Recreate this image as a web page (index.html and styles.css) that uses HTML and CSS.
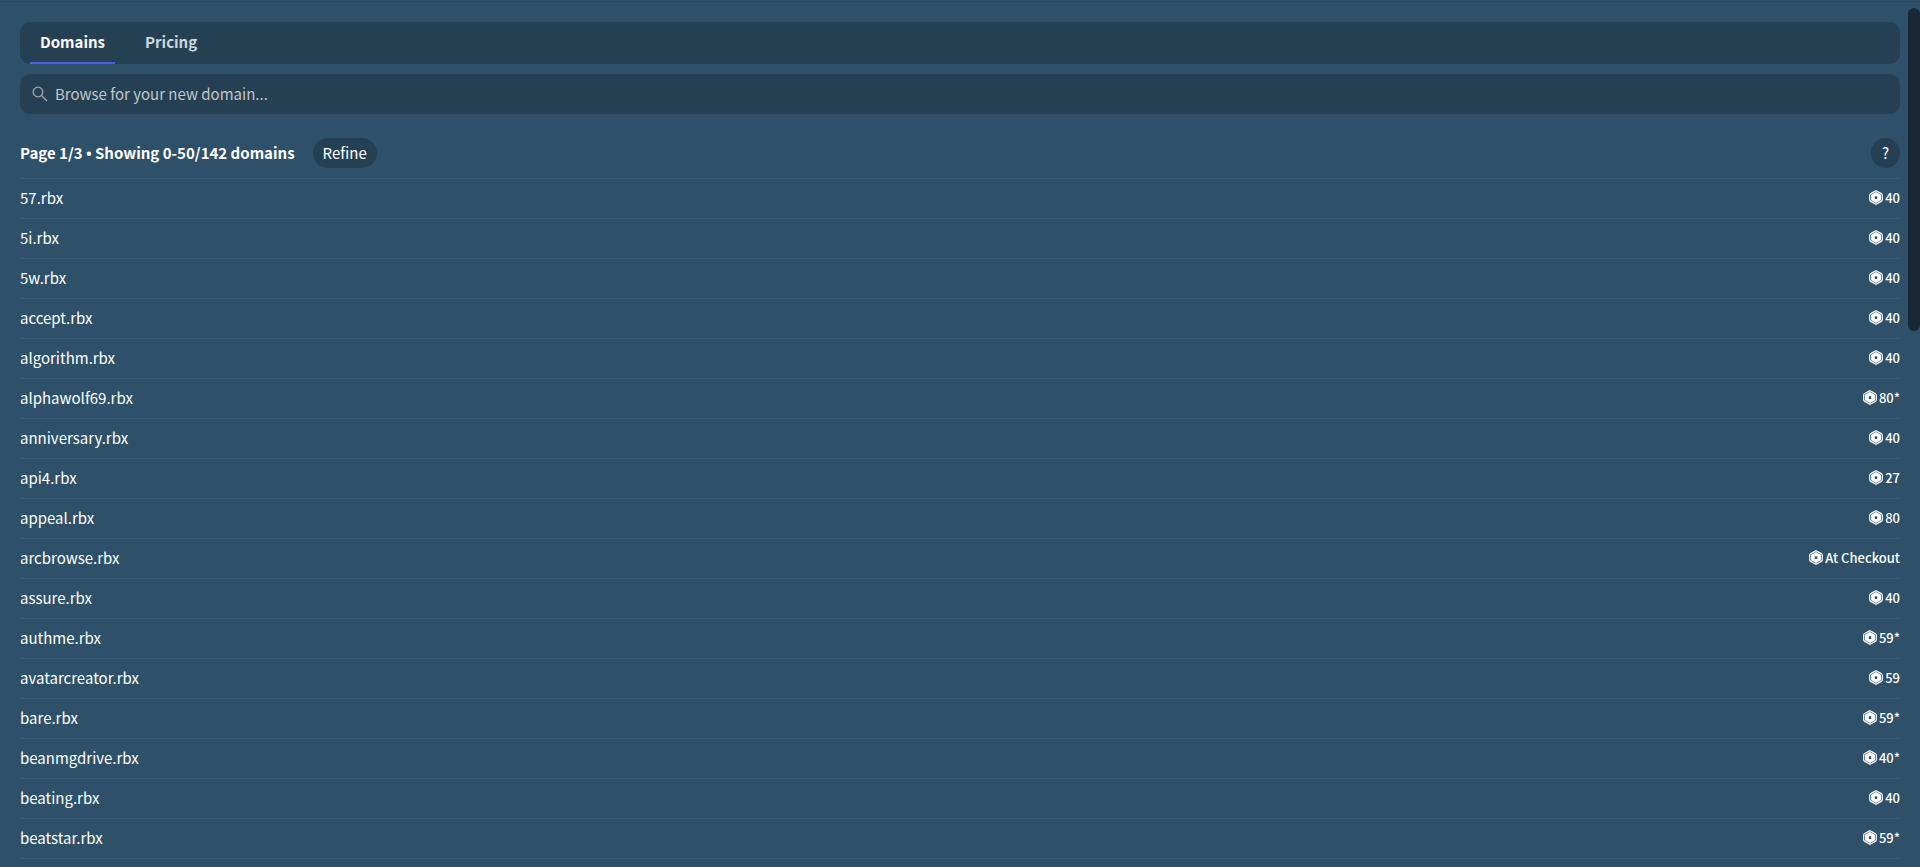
FILE: index.html
```html
<!DOCTYPE html>
<html lang="en">
<head>
<meta charset="utf-8">
<title>Domains</title>
<link rel="stylesheet" href="styles.css">
</head>
<body>
<svg class="sprite" aria-hidden="true">
  <symbol id="coin" viewBox="0 0 14 15">
    <path class="coin-ring" d="M7 .7 12.3 3.6Q13.3 4.2 13.3 5.2V9.8Q13.3 10.8 12.3 11.4L7 14.3 1.7 11.4Q.7 10.8.7 9.8V5.2Q.7 4.2 1.7 3.6Z"/>
    <path class="coin-core" fill-rule="evenodd" d="M7 1.9 12 4.7V10.3L7 13.1 2 10.3V4.7ZM5.8 6.2V9H8.2V6.2Z"/>
  </symbol>
</svg>
<main class="page">
  <nav class="tabs">
    <button class="tab tab-active" type="button">Domains</button>
    <button class="tab" type="button">Pricing</button>
  </nav>
  <label class="search">
    <svg class="search-icon" viewBox="0 0 16 16" aria-hidden="true"><circle cx="6" cy="6" r="4.8"/><path d="M9.5 9.5 15 15"/></svg>
    <input class="search-input" type="text" placeholder="Browse for your new domain..." aria-label="Browse for your new domain">
  </label>
  <header class="summary">
    <h1 class="summary-title">Page 1/3 <span class="bullet">•</span> Showing 0-50/142 domains</h1>
    <button class="pill" type="button">Refine</button>
    <button class="pill pill-help" type="button">?</button>
  </header>
  <ul class="list">
    <li class="row"><span>57.rbx</span><span class="price"><svg class="coin"><use href="#coin"/></svg>40</span></li>
    <li class="row"><span>5i.rbx</span><span class="price"><svg class="coin"><use href="#coin"/></svg>40</span></li>
    <li class="row"><span>5w.rbx</span><span class="price"><svg class="coin"><use href="#coin"/></svg>40</span></li>
    <li class="row"><span>accept.rbx</span><span class="price"><svg class="coin"><use href="#coin"/></svg>40</span></li>
    <li class="row"><span>algorithm.rbx</span><span class="price"><svg class="coin"><use href="#coin"/></svg>40</span></li>
    <li class="row"><span>alphawolf69.rbx</span><span class="price"><svg class="coin"><use href="#coin"/></svg>80*</span></li>
    <li class="row"><span>anniversary.rbx</span><span class="price"><svg class="coin"><use href="#coin"/></svg>40</span></li>
    <li class="row"><span>api4.rbx</span><span class="price"><svg class="coin"><use href="#coin"/></svg>27</span></li>
    <li class="row"><span>appeal.rbx</span><span class="price"><svg class="coin"><use href="#coin"/></svg>80</span></li>
    <li class="row"><span>arcbrowse.rbx</span><span class="price"><svg class="coin"><use href="#coin"/></svg>At Checkout</span></li>
    <li class="row"><span>assure.rbx</span><span class="price"><svg class="coin"><use href="#coin"/></svg>40</span></li>
    <li class="row"><span>authme.rbx</span><span class="price"><svg class="coin"><use href="#coin"/></svg>59*</span></li>
    <li class="row"><span>avatarcreator.rbx</span><span class="price"><svg class="coin"><use href="#coin"/></svg>59</span></li>
    <li class="row"><span>bare.rbx</span><span class="price"><svg class="coin"><use href="#coin"/></svg>59*</span></li>
    <li class="row"><span>beanmgdrive.rbx</span><span class="price"><svg class="coin"><use href="#coin"/></svg>40*</span></li>
    <li class="row"><span>beating.rbx</span><span class="price"><svg class="coin"><use href="#coin"/></svg>40</span></li>
    <li class="row"><span>beatstar.rbx</span><span class="price"><svg class="coin"><use href="#coin"/></svg>59*</span></li>
  </ul>
</main>
<div class="scroll-thumb"></div>
</body>
</html>
```
FILE: styles.css
```css
* { box-sizing: border-box; }

body {
  margin: 0;
  min-height: 100vh;
  background: #2e5169;
  border-top: 1px solid #2e5169;
  box-shadow: inset 0 1px #294a60;
  color: #fff;
  font: 15px/24px "Noto Sans CJK SC", "Noto Sans", sans-serif;
}

button, input { font: inherit; color: inherit; border: 0; }
button { cursor: pointer; }

.sprite { position: absolute; width: 0; height: 0; }

.page { padding: 21px 20px 0; }

.tabs {
  display: flex;
  gap: 20px;
  height: 42px;
  padding: 0 10px;
  background: #264053;
  border-radius: 10px;
}

.tab {
  padding: 0 10px;
  background: none;
  border-bottom: 2px solid transparent;
  color: #ced6db;
  font-weight: 700;
}

.tab-active { color: #fff; border-color: #4a5cff; }

.search {
  display: flex;
  align-items: center;
  gap: 7px;
  height: 40px;
  margin-top: 10px;
  padding: 0 12px;
  background: #264053;
  border-radius: 10px;
}

.search-icon {
  width: 16px;
  height: 16px;
  fill: none;
  stroke: #a4a7a9;
  stroke-width: 1.3;
}

.search-input { flex: 1; padding: 0; background: none; outline: 0; }
.search-input::placeholder { color: #c0c6ca; opacity: 1; }

.summary {
  display: flex;
  align-items: center;
  gap: 18px;
  padding: 24px 0 10px;
}

.summary-title { margin: 0; font-size: 15px; font-weight: 700; }
.bullet { font-family: "Noto Sans", sans-serif; line-height: 1; }

.pill {
  height: 30px;
  padding: 0 10px;
  border-radius: 15px;
  background: #264053;
}

.pill-help { min-width: 29px; margin-left: auto; }

.list { margin: 0; padding: 0; list-style: none; border-top: 1px solid #3a5c75; }

.row {
  display: flex;
  align-items: center;
  justify-content: space-between;
  height: 40px;
  padding-bottom: 2px;
  border-bottom: 1px solid #3a5c75;
}

.price {
  display: flex;
  align-items: center;
  gap: 2px;
  font-size: 13px;
  font-weight: 500;
  line-height: 26px;
}

.coin { width: 14px; height: 15px; }
.coin-ring { fill: none; stroke: #fff; stroke-width: 1.2; }
.coin-core { fill: #fff; }

.scroll-thumb {
  position: fixed;
  top: 8px;
  right: 0;
  width: 12px;
  height: 323px;
  border-radius: 6px;
  background: #182835;
}
```
